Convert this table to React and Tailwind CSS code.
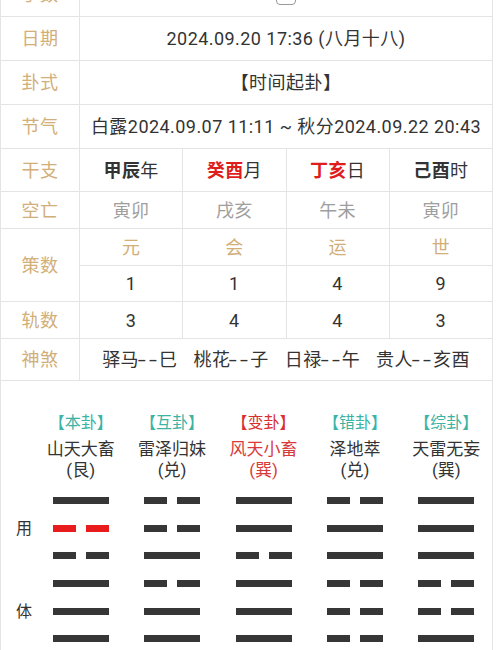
import React from 'react';

const HEX = [
    { tag: '本卦', name: '山天大畜', gua: '艮', lines: [1, 0, 0, 1, 1, 1], moving: 1 },
    { tag: '互卦', name: '雷泽归妹', gua: '兑', lines: [0, 0, 1, 0, 1, 1] },
    { tag: '变卦', name: '风天小畜', gua: '巽', lines: [1, 1, 0, 1, 1, 1], red: true },
    { tag: '错卦', name: '泽地萃', gua: '兑', lines: [0, 1, 1, 0, 0, 0] },
    { tag: '综卦', name: '天雷无妄', gua: '巽', lines: [1, 1, 1, 0, 0, 1] },
];

const SHENSHA = [
    ['驿马', '巳'],
    ['桃花', '子'],
    ['日禄', '午'],
    ['贵人', '亥酉'],
];

function Label({ children, className = '' }) {
    return (
        <div className={`w-[79px] shrink-0 border-r border-[#e4e4e4] flex items-center justify-center text-[#d2ae78] ${className}`}>
            {children}
        </div>
    );
}

function Cells({ items, className = '' }) {
    return (
        <div className="flex-1 flex">
            {items.map((it, i) => (
                <div key={i} className={`flex-1 flex items-center justify-center ${i < 3 ? 'border-r border-[#e4e4e4]' : ''} ${className}`}>
                    {it}
                </div>
            ))}
        </div>
    );
}

function Yao({ solid, red }) {
    const color = red ? 'bg-[#e81c1c]' : 'bg-[#363636]';
    if (solid) return <div className={`w-[56px] h-[7px] ${color}`} />;
    return (
        <div className="w-[56px] h-[7px] flex justify-between">
            <div className={`w-[23px] h-full ${color}`} />
            <div className={`w-[23px] h-full ${color}`} />
        </div>
    );
}

export default function App() {
    return (
        <div className="w-[493px] border-x border-[#e4e4e4] bg-white text-[#333] text-[18px] tracking-[0.45px] font-[Roboto,'Noto_Sans_CJK_SC',sans-serif] overflow-hidden">
            {/* table */}
            <div className="flex h-[44px] -mt-[27px] border-b border-[#e4e4e4]">
                <Label>手数</Label>
                <div className="flex-1 flex items-center justify-center">
                    <div className="w-[20px] h-[20px] rounded-[4px] border border-[#9a9a9a]" />
                </div>
            </div>
            <div className="flex h-[44px] border-b border-[#e4e4e4]">
                <Label>日期</Label>
                <div className="flex-1 flex items-center justify-center">2024.09.20 17:36 (八月十八)</div>
            </div>
            <div className="flex h-[44px] border-b border-[#e4e4e4]">
                <Label>卦式</Label>
                <div className="flex-1 flex items-center justify-center">【时间起卦】</div>
            </div>
            <div className="flex h-[44px] border-b border-[#e4e4e4]">
                <Label>节气</Label>
                <div className="flex-1 flex items-center justify-center whitespace-nowrap">白露2024.09.07 11:11 ~ 秋分2024.09.22 20:43</div>
            </div>
            <div className="flex h-[43px] border-b border-[#e4e4e4]">
                <Label>干支</Label>
                <Cells
                    items={[
                        <span><b className="font-bold">甲辰</b>年</span>,
                        <span><b className="font-bold text-[#e01d1d]">癸酉</b>月</span>,
                        <span><b className="font-bold text-[#e01d1d]">丁亥</b>日</span>,
                        <span><b className="font-bold">己酉</b>时</span>,
                    ]}
                />
            </div>
            <div className="flex h-[37px] border-b border-[#e4e4e4]">
                <Label>空亡</Label>
                <Cells items={['寅卯', '戌亥', '午未', '寅卯']} className="text-[#9e9e9e]" />
            </div>
            <div className="flex h-[73px] border-b border-[#e4e4e4]">
                <Label>策数</Label>
                <div className="flex-1 flex flex-col">
                    <div className="h-[37px] flex border-b border-[#e4e4e4]">
                        <Cells items={['元', '会', '运', '世']} className="text-[#d2ae78]" />
                    </div>
                    <div className="flex-1 flex">
                        <Cells items={['1', '1', '4', '9']} />
                    </div>
                </div>
            </div>
            <div className="flex h-[37px] border-b border-[#e4e4e4]">
                <Label>轨数</Label>
                <Cells items={['3', '4', '4', '3']} />
            </div>
            <div className="flex h-[42px] border-b border-[#e4e4e4]">
                <Label>神煞</Label>
                <div className="flex-1 flex items-center justify-center gap-[16px] whitespace-nowrap">
                    {SHENSHA.map(([k, v]) => (
                        <span key={k}>
                            {k}
                            <span className="inline-block scale-x-[1.6] mx-[3px] tracking-[2px]">--</span>
                            {v}
                        </span>
                    ))}
                </div>
            </div>

            {/* hexagrams */}
            <div className="pt-[31px] pb-[20px] text-[17px] leading-[21px] tracking-normal">
                <div className="flex pl-[34px]">
                    {HEX.map((h) => (
                        <div key={h.tag} className="flex-1 flex flex-col items-center">
                            <div className={`mb-[6px] text-[16px] ${h.tag === '变卦' ? 'text-[#d83030]' : 'text-[#3bb3a5]'}`}>【{h.tag}】</div>
                            <div className={h.red ? 'text-[#d83a3a]' : ''}>{h.name}</div>
                            <div className={h.red ? 'text-[#d83a3a]' : ''}>({h.gua})</div>
                        </div>
                    ))}
                </div>
                <div className="flex mt-[6px]">
                    <div className="w-[34px] flex flex-col pl-[15px] text-[16px]">
                        {[0, 1, 2, 3, 4, 5].map((i) => (
                            <div key={i} className="h-[27.6px] flex items-center">
                                {i === 1 ? '用' : i === 4 ? '体' : ''}
                            </div>
                        ))}
                    </div>
                    {HEX.map((h) => (
                        <div key={h.tag} className="flex-1 flex flex-col items-center">
                            {h.lines.map((l, i) => (
                                <div key={i} className="h-[27.6px] flex items-center">
                                    <Yao solid={l === 1} red={h.moving === i} />
                                </div>
                            ))}
                        </div>
                    ))}
                </div>
            </div>
        </div>
    );
}
